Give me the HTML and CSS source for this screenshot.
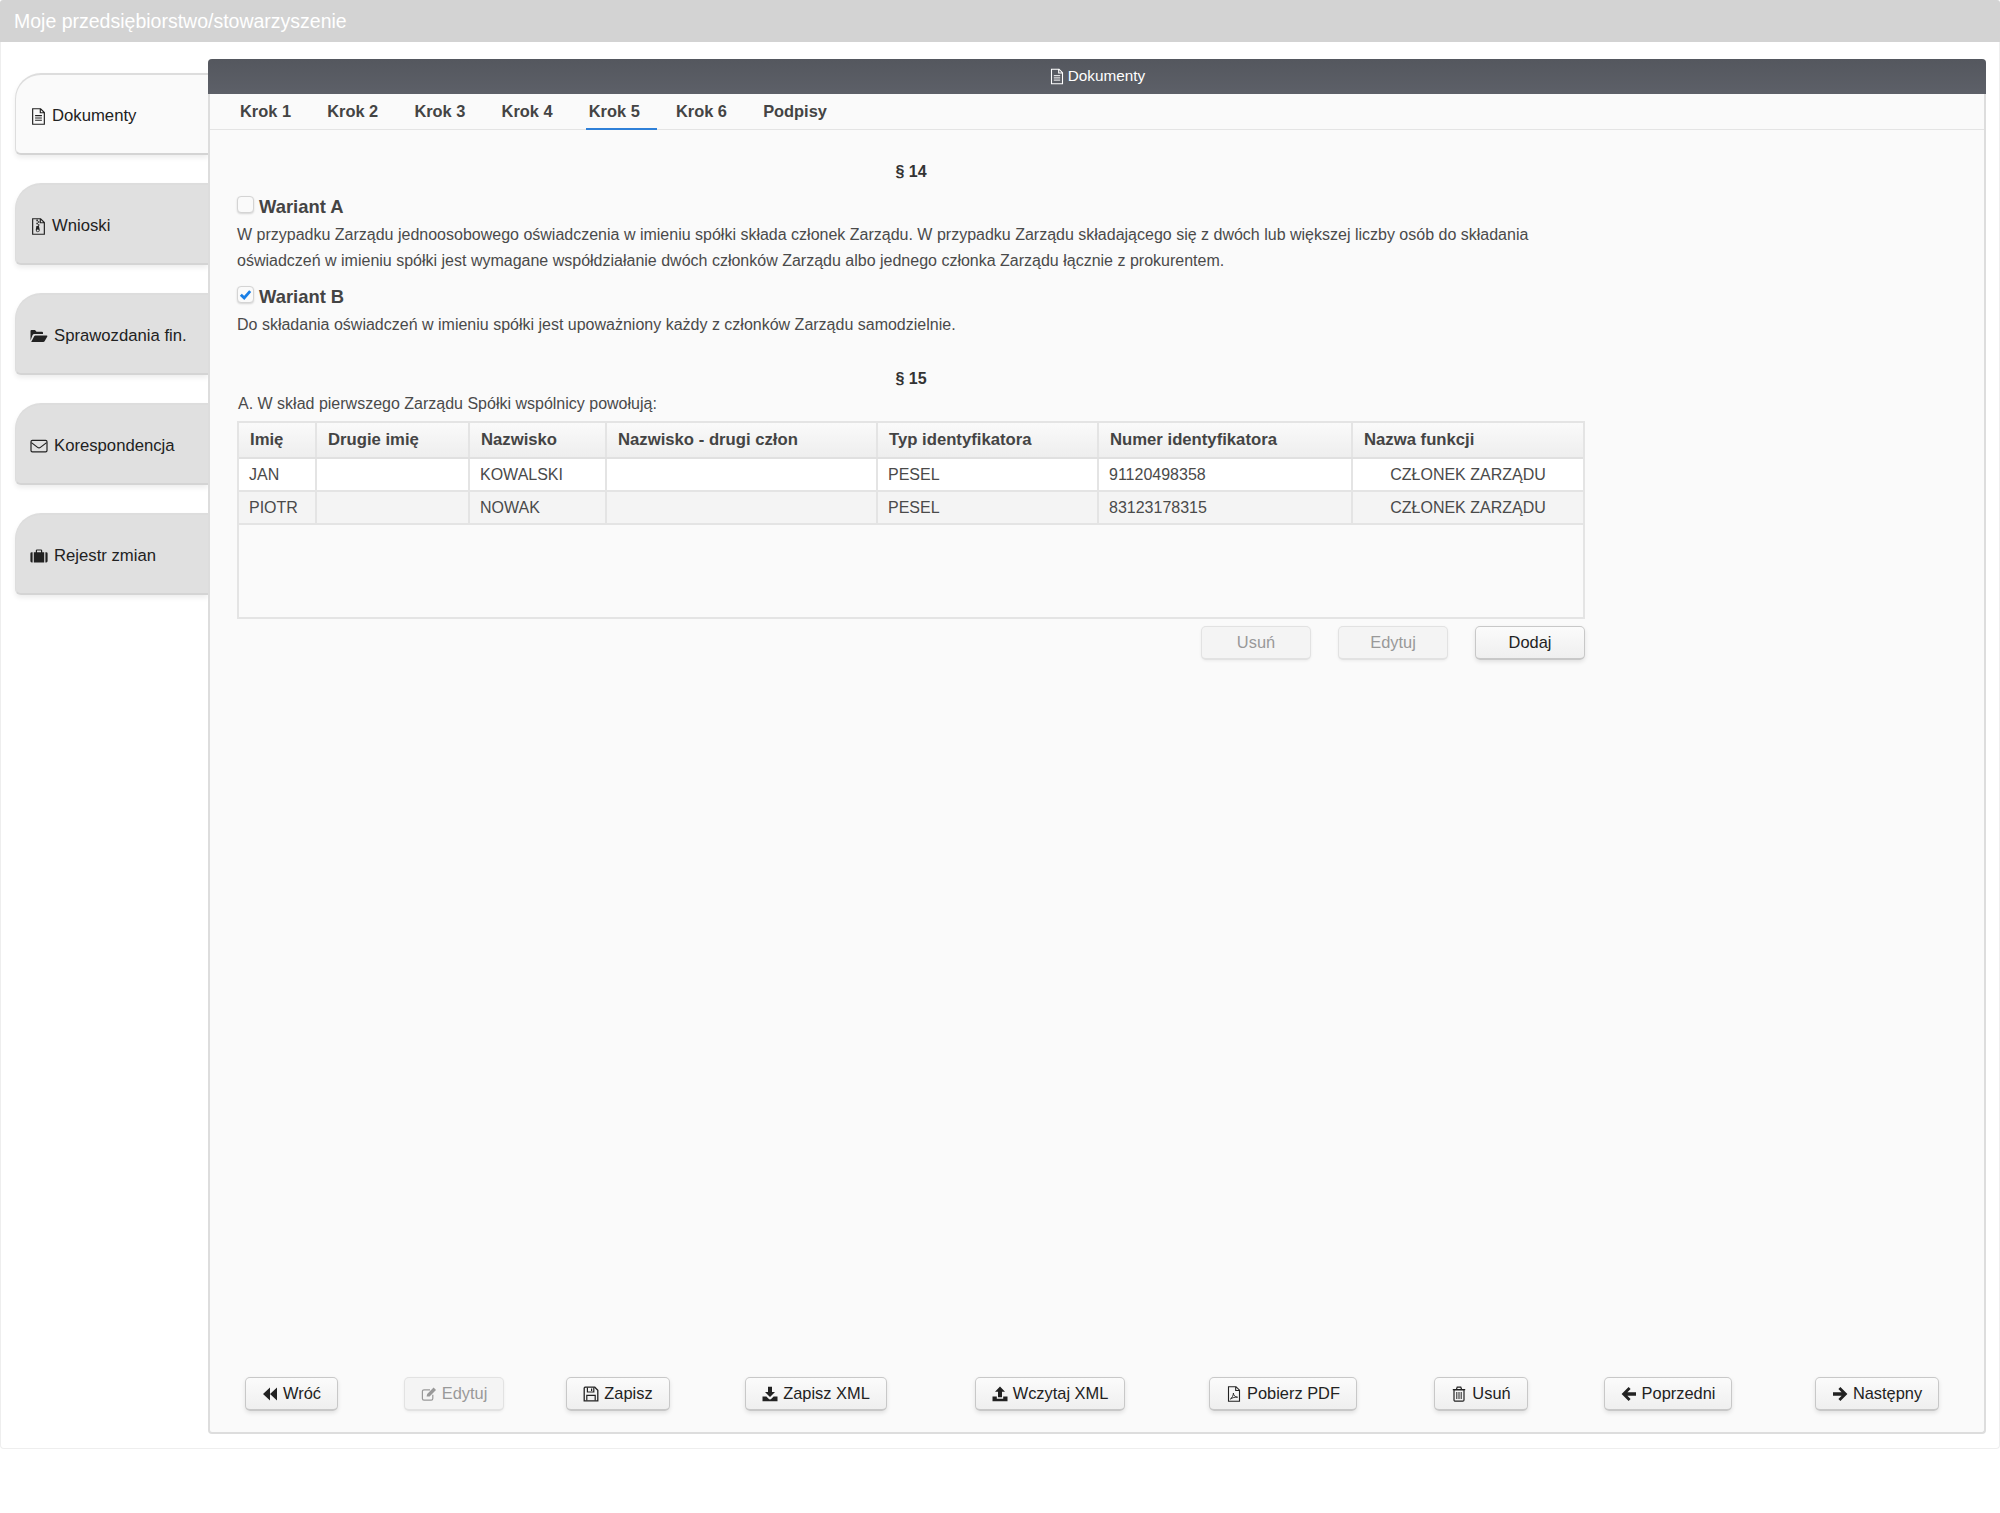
FILE: index.html
```html
<!DOCTYPE html>
<html lang="pl">
<head>
<meta charset="utf-8">
<title>Moje przedsiębiorstwo/stowarzyszenie</title>
<link rel="stylesheet" href="styles.css">
</head>
<body>
<svg class="defs" width="0" height="0" aria-hidden="true">
  <symbol id="i-doc" viewBox="0 0 16 16"><path d="M2.5 .7H10L13.5 4.2V15.3H2.5ZM9.7 .9V4.5H13.3" fill="none" stroke="currentColor" stroke-width="1.1"/><path d="M4.8 7.2H11.2M4.8 9.4H11.2M4.8 11.6H11.2" stroke="currentColor" stroke-width="1"/></symbol>
  <symbol id="i-zip" viewBox="0 0 16 16"><path d="M2.5 .7H10L13.5 4.2V15.3H2.5ZM9.7 .9V4.5H13.3" fill="none" stroke="currentColor" stroke-width="1.1"/><path d="M6 1.5H7.4V3H6ZM7.4 3H8.8V4.4H7.4ZM6 4.4H7.4V5.8H6ZM7.4 5.8H8.8V7.2H7.4ZM6 7.6H8.4L9.2 11.4A1.9 1.9 0 1 1 5.4 11.4ZM7.3 10.8A1 1 0 1 0 7.31 12.8A1 1 0 1 0 7.3 10.8Z" fill="currentColor" fill-rule="evenodd"/></symbol>
  <symbol id="i-folder" viewBox="0 0 18 16"><path d="M.5 12.5V3A1 1 0 0 1 1.5 2H5L6.5 3.7H12A1 1 0 0 1 13 4.7V6H4.3A2 2 0 0 0 2.6 7ZM1.2 14 4.2 8.2A1.4 1.4 0 0 1 5.4 7.4H16.6A.8.8 0 0 1 17.3 8.6L14.6 13.2A1.6 1.6 0 0 1 13.2 14Z" fill="currentColor"/></symbol>
  <symbol id="i-mail" viewBox="0 0 18 16"><rect x="1" y="2.4" width="16" height="11.4" rx="1.4" fill="none" stroke="currentColor" stroke-width="1.2"/><path d="M1.4 4.6 7.6 9.4A2.2 2.2 0 0 0 10.4 9.4L16.6 4.6" fill="none" stroke="currentColor" stroke-width="1.2"/></symbol>
  <symbol id="i-case" viewBox="0 0 18 16"><path d="M.4 5.6A1.4 1.4 0 0 1 1.8 4.2H2.6V14.4H1.8A1.4 1.4 0 0 1 .4 13ZM3.8 4.2H5.8V2.6A1.2 1.2 0 0 1 7 1.4H11A1.2 1.2 0 0 1 12.2 2.6V4.2H14.2V14.4H3.8ZM7 4.2H11V2.6H7ZM15.4 4.2H16.2A1.4 1.4 0 0 1 17.6 5.6V13A1.4 1.4 0 0 1 16.2 14.4H15.4Z" fill="currentColor" fill-rule="evenodd"/></symbol>
  <symbol id="i-back" viewBox="0 0 16 16"><path d="M8 1.6V14.4L1 8ZM15 1.6V14.4L8 8Z" fill="currentColor"/></symbol>
  <symbol id="i-edit" viewBox="0 0 16 16"><path d="M11.8 8.8V12.6A1.6 1.6 0 0 1 10.2 14.2H3A1.6 1.6 0 0 1 1.4 12.6V5.4A1.6 1.6 0 0 1 3 3.8H9" fill="none" stroke="currentColor" stroke-width="1.2"/><path d="M5.6 10.6 6.2 8 12.6 1.6 15 4 8.6 10.4Z" fill="currentColor"/></symbol>
  <symbol id="i-save" viewBox="0 0 16 16"><path d="M2 1.2H11.8L14.8 4.2V14.8H1.2V2Z" fill="none" stroke="currentColor" stroke-width="1.3"/><path d="M4.4 1.4V6H10.8V1.4M8.6 2.4V5" fill="none" stroke="currentColor" stroke-width="1.2"/><path d="M3.8 14.4V9.4H12.2V14.4" fill="none" stroke="currentColor" stroke-width="1.2"/></symbol>
  <symbol id="i-down" viewBox="0 0 16 16"><path d="M6 .8H10V6H13L8 11 3 6H6ZM.5 10.6H4.4L6.6 12.8A2 2 0 0 0 9.4 12.8L11.6 10.6H15.5V15.2H.5Z" fill="currentColor"/></symbol>
  <symbol id="i-up" viewBox="0 0 16 16"><path d="M8 .6 13 5.8H10V11.2H6V5.8H3ZM.5 10.4H4.8V12.8H11.2V10.4H15.5V15.2H.5Z" fill="currentColor"/></symbol>
  <symbol id="i-pdf" viewBox="0 0 16 16"><path d="M2.5 .7H10L13.5 4.2V15.3H2.5ZM9.7 .9V4.5H13.3" fill="none" stroke="currentColor" stroke-width="1.1"/><path d="M4.4 13C6 12 7.4 9.4 7.4 7 7.6 9.6 9 11 11.6 11.2 9 11 6.6 11.6 4.4 13Z" fill="none" stroke="currentColor" stroke-width=".9"/></symbol>
  <symbol id="i-trash" viewBox="0 0 16 16"><path d="M3 4H13V14A1.2 1.2 0 0 1 11.8 15.2H4.2A1.2 1.2 0 0 1 3 14ZM1.8 3.6H14.2M5.4 3.4 6.2 1.2H9.8L10.6 3.4" fill="none" stroke="currentColor" stroke-width="1.2"/><path d="M5.8 6V13M8 6V13M10.2 6V13" stroke="currentColor" stroke-width="1"/></symbol>
  <symbol id="i-left" viewBox="0 0 16 16"><path d="M7.6 1 9.6 3 6.4 6.2H15V9.8H6.4L9.6 13 7.6 15 .6 8Z" fill="currentColor"/></symbol>
  <symbol id="i-right" viewBox="0 0 16 16"><path d="M8.4 1 6.4 3 9.6 6.2H1V9.8H9.6L6.4 13 8.4 15 15.4 8Z" fill="currentColor"/></symbol>
</svg>

<header class="topbar">Moje przedsiębiorstwo/stowarzyszenie</header>

<div class="page">
  <nav class="side">
    <a class="side-tab is-active"><svg class="ico ico-side"><use href="#i-doc"/></svg>Dokumenty</a>
    <a class="side-tab"><svg class="ico ico-side"><use href="#i-zip"/></svg>Wnioski</a>
    <a class="side-tab"><svg class="ico ico-wide"><use href="#i-folder"/></svg>Sprawozdania fin.</a>
    <a class="side-tab"><svg class="ico ico-wide"><use href="#i-mail"/></svg>Korespondencja</a>
    <a class="side-tab"><svg class="ico ico-wide"><use href="#i-case"/></svg>Rejestr zmian</a>
  </nav>

  <main class="panel">
    <div class="panel-head"><svg class="ico ico-head"><use href="#i-doc"/></svg>Dokumenty</div>
    <div class="steps">
      <a class="step">Krok 1</a>
      <a class="step">Krok 2</a>
      <a class="step">Krok 3</a>
      <a class="step">Krok 4</a>
      <a class="step is-active">Krok 5</a>
      <a class="step">Krok 6</a>
      <a class="step">Podpisy</a>
    </div>

    <section class="content">
      <h3 class="para">§ 14</h3>
      <label class="variant variant-a"><span class="check"></span>Wariant A</label>
      <p class="text">W przypadku Zarządu jednoosobowego oświadczenia w imieniu spółki składa członek Zarządu. W przypadku Zarządu składającego się z dwóch lub większej liczby osób do składania<br>oświadczeń w imieniu spółki jest wymagane współdziałanie dwóch członków Zarządu albo jednego członka Zarządu łącznie z prokurentem.</p>
      <label class="variant variant-b"><span class="check is-on"><svg viewBox="0 0 16 16"><path d="M3 8.2 6.6 11.6 13 4.4" fill="none" stroke="#1a7fe6" stroke-width="3"/></svg></span>Wariant B</label>
      <p class="text">Do składania oświadczeń w imieniu spółki jest upoważniony każdy z członków Zarządu samodzielnie.</p>
      <h3 class="para para-15">§ 15</h3>
      <p class="lead">A. W skład pierwszego Zarządu Spółki wspólnicy powołują:</p>

      <div class="grid-box">
        <table class="grid">
          <colgroup>
            <col class="c1"><col class="c2"><col class="c3"><col class="c4"><col class="c5"><col class="c6"><col class="c7">
          </colgroup>
          <thead>
            <tr><th>Imię</th><th>Drugie imię</th><th>Nazwisko</th><th>Nazwisko - drugi człon</th><th>Typ identyfikatora</th><th>Numer identyfikatora</th><th>Nazwa funkcji</th></tr>
          </thead>
          <tbody>
            <tr><td>JAN</td><td></td><td>KOWALSKI</td><td></td><td>PESEL</td><td>91120498358</td><td class="center">CZŁONEK ZARZĄDU</td></tr>
            <tr class="alt"><td>PIOTR</td><td></td><td>NOWAK</td><td></td><td>PESEL</td><td>83123178315</td><td class="center">CZŁONEK ZARZĄDU</td></tr>
          </tbody>
        </table>
      </div>

      <div class="grid-actions">
        <button class="btn btn-grid" disabled>Usuń</button>
        <button class="btn btn-grid" disabled>Edytuj</button>
        <button class="btn btn-grid">Dodaj</button>
      </div>
    </section>

    <footer class="toolbar">
      <button class="btn"><svg class="ico ico-btn"><use href="#i-back"/></svg>Wróć</button>
      <button class="btn" disabled><svg class="ico ico-btn"><use href="#i-edit"/></svg>Edytuj</button>
      <button class="btn"><svg class="ico ico-btn"><use href="#i-save"/></svg>Zapisz</button>
      <button class="btn"><svg class="ico ico-btn"><use href="#i-down"/></svg>Zapisz XML</button>
      <button class="btn"><svg class="ico ico-btn"><use href="#i-up"/></svg>Wczytaj XML</button>
      <button class="btn"><svg class="ico ico-btn"><use href="#i-pdf"/></svg>Pobierz PDF</button>
      <button class="btn"><svg class="ico ico-btn"><use href="#i-trash"/></svg>Usuń</button>
      <button class="btn"><svg class="ico ico-btn"><use href="#i-left"/></svg>Poprzedni</button>
      <button class="btn"><svg class="ico ico-btn"><use href="#i-right"/></svg>Następny</button>
    </footer>
  </main>
</div>
</body>
</html>
```

FILE: styles.css
```css
* { box-sizing: border-box; }
html, body { margin: 0; padding: 0; }
body {
  width: 2000px;
  height: 1513px;
  background: #fff;
  color: #4a4a4a;
  font-family: "Liberation Sans", Arial, sans-serif;
  font-size: 16px;
  overflow: hidden;
}
.defs { position: absolute; }
.ico { display: block; flex: none; fill: currentColor; }

.topbar {
  height: 42px;
  padding: 0 14px;
  background: #d3d3d3;
  border-radius: 3px 3px 0 0;
  color: #fff;
  font-size: 19.5px;
  line-height: 42px;
}

.page {
  display: flex;
  height: 1407px;
  padding: 17px 14px 14px 14px;
  border: 1px solid #eee;
  border-top: 0;
  border-radius: 0 0 4px 4px;
}

.side {
  flex: none;
  width: 193px;
  padding-top: 14px;
  display: flex;
  flex-direction: column;
  gap: 28px;
}
.side-tab {
  display: flex;
  align-items: center;
  height: 82px;
  padding: 4px 0 0 14px;
  background: #e0e0e0;
  border: 1px solid #ddd;
  border-top-width: 2px;
  border-bottom-width: 2px;
  border-bottom-color: #d4d4d4;
  border-right: 0;
  border-radius: 26px 0 0 6px;
  box-shadow: 0 3px 5px rgba(0,0,0,.07);
  color: #222;
  font-size: 16.7px;
}
.side-tab.is-active { background: #fafafa; }
.ico-side { width: 17px; height: 17px; margin-right: 5px; }
.ico-wide { width: 18px; height: 16px; margin-right: 6px; }

.panel {
  flex: none;
  width: 1778px;
  display: flex;
  flex-direction: column;
  background: #fafafa;
  border: 2px solid #ddd;
  border-top: 0;
  border-radius: 4px;
  position: relative;
}
.panel-head {
  display: flex;
  align-items: center;
  justify-content: center;
  height: 35px;
  margin: 0 -2px;
  padding-bottom: 1px;
  background: linear-gradient(#54575e, #5d6068);
  border-radius: 4px 4px 0 0;
  color: #fff;
  font-size: 15.3px;
}
.ico-head { width: 16px; height: 17px; margin-right: 3px; }

.steps {
  display: flex;
  gap: 16px;
  height: 36px;
  padding-left: 27px;
  border-bottom: 1px solid #e4e4e4;
}
.step {
  display: block;
  height: 36px;
  width: 71.2px;
  padding-left: 3px;
  color: #444;
  font-size: 16.4px;
  font-weight: bold;
  line-height: 35px;
}
.step.is-active { border-bottom: 2px solid #2f80d8; }

.content {
  width: 1348px;
  margin-left: 27px;
}
.para {
  margin: 0;
  color: #333;
  font-size: 16px;
  font-weight: bold;
  line-height: 20px;
  text-align: center;
}
.content > .para:first-child { margin-top: 32px; }
.para-15 { margin-top: 31px; }

.variant {
  display: flex;
  align-items: center;
  height: 24px;
  margin-bottom: 3px;
  color: #444;
  font-size: 18.4px;
  font-weight: bold;
}
.variant-a { margin-top: 13px; }
.variant-b { margin-top: 11px; }
.check {
  flex: none;
  width: 17px;
  height: 17px;
  margin: -5px 5px 0 0;
  background: #fafafa;
  border: 1px solid #d4d4d4;
  border-radius: 4px;
  box-shadow: 0 1px 2px rgba(0,0,0,.15);
}
.check svg { display: block; width: 15px; height: 15px; }

.text {
  margin: 0;
  font-size: 16px;
  line-height: 26px;
}
.lead {
  margin: 5px 0 7px 1px;
  font-size: 16px;
  line-height: 20px;
}

.grid-box {
  height: 198px;
  border: 2px solid #e4e4e4;
  background: #fafafa;
}
.grid {
  width: 100%;
  table-layout: fixed;
  border-collapse: collapse;
  font-size: 16px;
}
.c1 { width: 77px; }
.c2 { width: 153px; }
.c3 { width: 137px; }
.c4 { width: 271px; }
.c5 { width: 221px; }
.c6 { width: 254px; }
.grid th {
  height: 35px;
  padding: 0 10px 0 11px;
  background: linear-gradient(#fafafa, #eee);
  border-right: 2px solid #e4e4e4;
  border-bottom: 2px solid #e0e0e0;
  color: #444;
  font-size: 16.7px;
  font-weight: bold;
  text-align: left;
}
.grid td {
  height: 33px;
  padding: 0 10px;
  background: #fff;
  border-right: 2px solid #e4e4e4;
  border-bottom: 2px solid #e4e4e4;
}
.grid th:last-child, .grid td:last-child { border-right: 0; }
.grid .alt td { background: #f4f4f4; }
.grid td.center { text-align: center; }

.btn {
  display: inline-flex;
  align-items: center;
  justify-content: center;
  height: 34px;
  padding: 0 16px;
  background: linear-gradient(#fbfbfb, #efefef);
  border: 1px solid #c8c8c8;
  border-bottom-width: 2px;
  border-radius: 5px;
  box-shadow: 0 2px 4px rgba(0,0,0,.1);
  color: #222;
  font-family: inherit;
  font-size: 16.4px;
  white-space: nowrap;
}
.btn:disabled {
  background: #f4f4f4;
  border-color: #e2e2e2;
  box-shadow: 0 1px 3px rgba(0,0,0,.06);
  color: #999;
}
.ico-btn { width: 16px; height: 16px; margin-right: 5px; }

.grid-actions {
  display: flex;
  justify-content: flex-end;
  gap: 27px;
  margin-top: 7px;
}
.btn-grid { width: 110px; padding: 0; }

.toolbar {
  display: grid;
  grid-template-columns: 163px 162px 166px 230px 238px 228px 168px 206px 212px;
  justify-items: center;
  margin-top: auto;
  padding-bottom: 21px;
}
```
